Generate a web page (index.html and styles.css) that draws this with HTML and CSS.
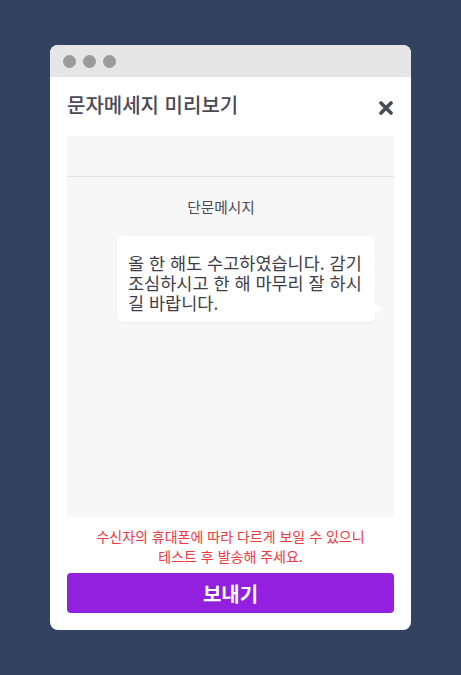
FILE: index.html
```html
<!DOCTYPE html>
<html lang="ko">
<head>
<meta charset="utf-8">
<link rel="stylesheet" href="styles.css">
</head>
<body>
<div class="window">
  <div class="titlebar">
    <span class="dot"></span><span class="dot"></span><span class="dot"></span>
  </div>
  <div class="content">
    <div class="header">
      <h1 class="title">문자메세지 미리보기</h1>
      <svg class="close" width="14" height="14" viewBox="0 0 14 14"><path d="M2 2 L12 12 M12 2 L2 12" stroke="#4a4a55" stroke-width="3.6" stroke-linecap="round"/></svg>
    </div>
    <div class="phone">
      <div class="phone-top"></div>
      <div class="phone-body">
        <div class="msg-type">단문메시지</div>
        <div class="bubble">올 한 해도 수고하였습니다. 감기 조심하시고 한 해 마무리 잘 하시길 바랍니다.</div>
      </div>
    </div>
    <p class="notice">수신자의 휴대폰에 따라 다르게 보일 수 있으니<br>테스트 후 발송해 주세요.</p>
    <button class="send">보내기</button>
  </div>
</div>
</body>
</html>
```

FILE: styles.css
```css
html, body { margin: 0; padding: 0; }
body {
  background: #344262;
  font-family: "Noto Sans CJK KR", "Noto Sans", sans-serif;
  padding: 45px 50px 0 50px;
  height: 675px;
  box-sizing: border-box;
}
.window {
  width: 361px;
  height: 585px;
  background: #fff;
  border-radius: 8px;
  overflow: hidden;
  display: flex;
  flex-direction: column;
}
.titlebar {
  height: 32px;
  background: #e6e6e6;
  display: flex;
  align-items: center;
  gap: 7px;
  padding-left: 13px;
}
.dot {
  width: 13px; height: 13px;
  border-radius: 50%;
  background: #9b9b9b;
}
.content {
  padding: 0 17px;
  display: flex;
  flex-direction: column;
}
.header {
  height: 59px;
  display: flex;
  align-items: center;
  justify-content: space-between;
  padding-right: 1px;
}
.title {
  margin: 0;
  font-size: 20px;
  font-weight: 500;
  color: #4a4a55;
  line-height: 24px;
  position: relative;
  top: -2px;
}
.close { position: relative; top: 1px; }
.phone {
  background: #f7f7f7;
  height: 381px;
  display: flex;
  flex-direction: column;
}
.phone-top {
  height: 40px;
  border-bottom: 1px solid #e2e2e2;
}
.phone-body {
  display: flex;
  flex-direction: column;
  align-items: flex-end;
  padding-right: 19px;
}
.msg-type {
  align-self: center;
  font-size: 14.7px;
  color: #4a4a55;
  margin-top: 20px;
  line-height: 20px;
}
.bubble {
  position: relative;
  margin-top: 19px;
  width: 258px;
  box-sizing: border-box;
  background: #fff;
  border-radius: 5px;
  padding: 17px 4px 9px 11px;
  font-size: 17.5px;
  line-height: 20px;
  color: #3e3e48;
  box-shadow: 0 1px 3px rgba(0,0,0,0.06);
}
.bubble::after {
  content: "";
  position: absolute;
  right: -7px;
  bottom: 8px;
  border-left: 7px solid #fff;
  border-top: 5px solid transparent;
  border-bottom: 5px solid transparent;
}
.notice {
  margin: 9px 0 0 0;
  text-align: center;
  font-size: 14px;
  line-height: 20px;
  color: #f0393f;
}
.send {
  margin-top: 7px;
  height: 40px;
  border: none;
  border-radius: 4px;
  background: #9220de;
  color: #fff;
  font-family: inherit;
  font-size: 20px;
  font-weight: 700;
}
```
